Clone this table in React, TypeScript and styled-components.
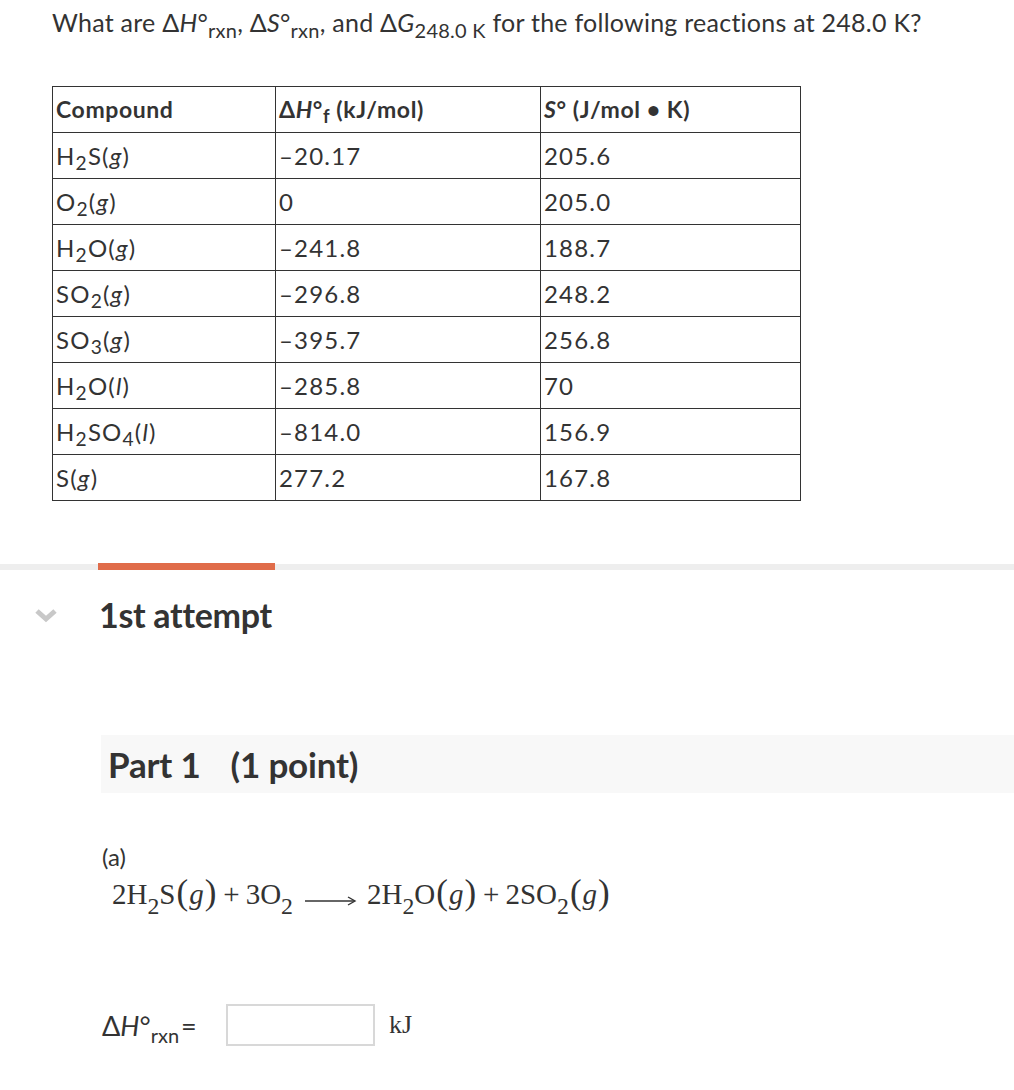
import React from 'react';
import styled, { createGlobalStyle } from 'styled-components';

const GlobalStyle = createGlobalStyle`
  body {
    margin: 0;
    background: #ffffff;
    color: #333333;
    font-family: Lato, 'Open Sans', sans-serif;
  }
`;

const Page = styled.div`
  width: 1014px;
  height: 1090px;
  overflow: hidden;
`;

const Question = styled.div`
  padding: 4px 0 0 52px;
  font-size: 25px;
  line-height: 36px;
  letter-spacing: 0.25px;
  white-space: nowrap;
`;

const Sub = styled.sub`
  font-size: 0.8em;
  vertical-align: -0.28em;
  line-height: 0;
`;

const Table = styled.table`
  margin: 46px 0 0 52px;
  border-collapse: collapse;
  width: 749px;
`;

const Cell = styled.td<{ $w?: number; $light?: boolean; $head?: boolean }>`
  width: ${(p) => (p.$w ? `${p.$w}px` : 'auto')};
  height: 45px;
  padding: 0 0 0 3px;
  border-top: 1px solid #333333;
  border-bottom: 1px solid #333333;
  border-left: 1px solid ${(p) => (p.$light ? '#cccccc' : '#333333')};
  border-right: 1px solid #333333;
  font-weight: ${(p) => (p.$head ? 700 : 400)};
  font-size: ${(p) => (p.$head ? '23px' : '24px')};
  letter-spacing: ${(p) => (p.$head ? '0.6px' : '1.2px')};
  line-height: 1;
  vertical-align: middle;
  white-space: nowrap;
`;

const Phase = styled.i`
  font-style: italic;
`;

const ProgressTrack = styled.div`
  margin-top: 63px;
  height: 6px;
  background: #eeeeee;
  display: flex;
`;

const ProgressFill = styled.div`
  margin-left: 98px;
  width: 177px;
  height: 7px;
  margin-top: -1px;
  background: #e06c4a;
`;

const AttemptRow = styled.div`
  display: flex;
  align-items: center;
  margin-top: 22px;
  height: 44px;
`;

const Chevron = styled.div`
  width: 99px;
  display: flex;
  padding-left: 34px;
  box-sizing: border-box;
  margin-top: 2px;
`;

const AttemptTitle = styled.h2`
  margin: 0;
  font-size: 34px;
  font-weight: 700;
  letter-spacing: -0.3px;
  color: #333333;
`;

const PartBar = styled.div`
  margin: 99px 0 0 101px;
  height: 58px;
  background: #f8f8f8;
  display: flex;
  align-items: center;
  padding-left: 7px;
  font-size: 35px;
  font-weight: 700;
  letter-spacing: -0.2px;
  gap: 30px;
`;

const Body = styled.div`
  padding-left: 102px;
`;

const Label = styled.div`
  margin-top: 50px;
  font-size: 24px;
  line-height: 28px;
`;

const Equation = styled.div`
  margin: 5px 0 0 10px;
  font-family: 'Liberation Serif', 'DejaVu Serif', serif;
  font-size: 29px;
  line-height: 34px;
  white-space: pre;
`;

const Paren = styled.span`
  font-size: 35px;
  margin: 0 1px;
`;

const Op = styled.span`
  margin: 0 6px;
`;

const EqSub = styled.sub`
  font-size: 0.82em;
  vertical-align: -0.4em;
  line-height: 0;
`;

const Arrow = styled.span`
  display: inline-block;
  margin: 0 10px 0 12px;
  vertical-align: middle;
`;

const AnswerRow = styled.div`
  margin-top: 90px;
  display: flex;
  align-items: center;
  height: 42px;
`;

const AnswerLabel = styled.div`
  font-size: 27px;
  width: 124px;
  white-space: nowrap;
`;

const LabelSub = styled.sub`
  font-size: 20px;
  vertical-align: -0.35em;
  line-height: 0;
  margin-right: 2px;
`;

const Input = styled.input`
  width: 149px;
  height: 42px;
  box-sizing: border-box;
  border: 2px solid #d8d8d8;
  background: #ffffff;
  outline: none;
`;

const Unit = styled.span`
  margin-left: 14px;
  font-family: 'Liberation Serif', serif;
  font-size: 26px;
`;

const H = () => (
  <>
    Δ<i>H</i>°
  </>
);

const rows: [React.ReactNode, string, string][] = [
  [<>H<Sub>2</Sub>S(<Phase>g</Phase>)</>, '–20.17', '205.6'],
  [<>O<Sub>2</Sub>(<Phase>g</Phase>)</>, '0', '205.0'],
  [<>H<Sub>2</Sub>O(<Phase>g</Phase>)</>, '–241.8', '188.7'],
  [<>SO<Sub>2</Sub>(<Phase>g</Phase>)</>, '–296.8', '248.2'],
  [<>SO<Sub>3</Sub>(<Phase>g</Phase>)</>, '–395.7', '256.8'],
  [<>H<Sub>2</Sub>O(<Phase>l</Phase>)</>, '–285.8', '70'],
  [<>H<Sub>2</Sub>SO<Sub>4</Sub>(<Phase>l</Phase>)</>, '–814.0', '156.9'],
  [<>S(<Phase>g</Phase>)</>, '277.2', '167.8'],
];

const App: React.FC = () => {
  return (
    <Page>
      <GlobalStyle />
      <Question>
        What are <H />
        <Sub>rxn</Sub>, Δ<i>S</i>°<Sub>rxn</Sub>, and Δ<i>G</i>
        <Sub>248.0 K</Sub> for the following reactions at 248.0 K?
      </Question>

      <Table>
        <tbody>
          <tr>
            <Cell $w={219} $head>Compound</Cell>
            <Cell $w={261} $head>
              <H />
              <Sub>f</Sub> (kJ/mol)
            </Cell>
            <Cell $light $head>
              <i>S</i>° (J/mol • K)
            </Cell>
          </tr>
          {rows.map(([name, dh, s], i) => (
            <tr key={i}>
              <Cell>{name}</Cell>
              <Cell>{dh}</Cell>
              <Cell $light>{s}</Cell>
            </tr>
          ))}
        </tbody>
      </Table>

      <ProgressTrack>
        <ProgressFill />
      </ProgressTrack>

      <AttemptRow>
        <Chevron>
          <svg width="24" height="16" viewBox="0 0 24 16">
            <path d="M3 4 L12 12 L21 4" fill="none" stroke="#c8c8c8" strokeWidth="5" />
          </svg>
        </Chevron>
        <AttemptTitle>1st attempt</AttemptTitle>
      </AttemptRow>

      <PartBar>
        <span>Part 1</span>
        <span>(1 point)</span>
      </PartBar>

      <Body>
        <Label>(a)</Label>
        <Equation>
          2H<EqSub>2</EqSub>S<Paren>(</Paren><i>g</i><Paren>)</Paren><Op>+</Op>3O<EqSub>2</EqSub>
          <Arrow>
            <svg width="52" height="12" viewBox="0 0 52 12">
              <path d="M0 6 H49" stroke="#333" strokeWidth="1.4" />
              <path d="M43 2 L50 6 L43 10" fill="none" stroke="#333" strokeWidth="1.4" />
            </svg>
          </Arrow>
          2H<EqSub>2</EqSub>O<Paren>(</Paren><i>g</i><Paren>)</Paren><Op>+</Op>2SO<EqSub>2</EqSub>
          <Paren>(</Paren><i>g</i><Paren>)</Paren>
        </Equation>

        <AnswerRow>
          <AnswerLabel>
            <H />
            <LabelSub>rxn</LabelSub>=
          </AnswerLabel>
          <Input type="text" />
          <Unit>kJ</Unit>
        </AnswerRow>
      </Body>
    </Page>
  );
};

export default App;
